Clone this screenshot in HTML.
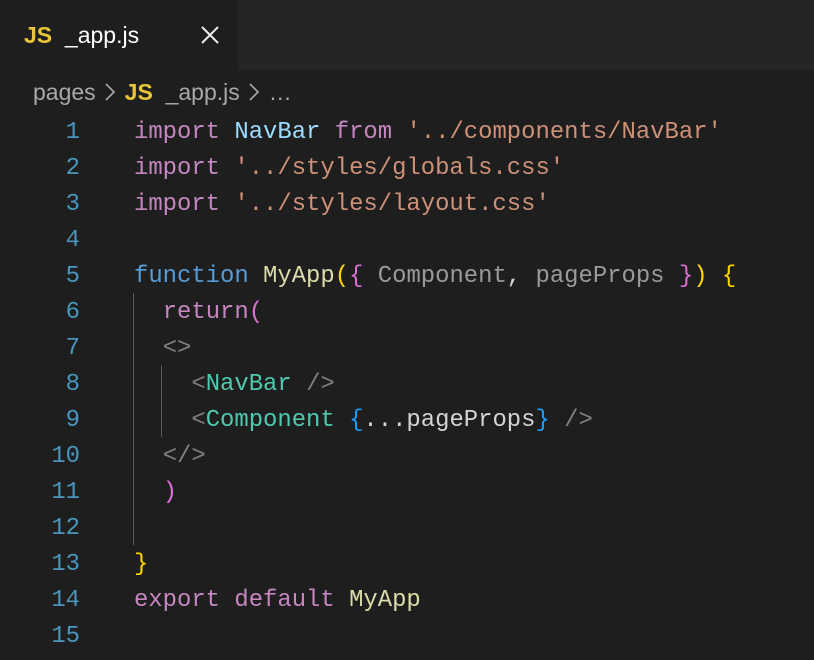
<!DOCTYPE html>
<html><head><style>
body{margin:0;width:814px;height:660px;background:#1e1e1e;overflow:hidden;font-family:"Liberation Sans",sans-serif}
.tabbar{position:absolute;left:0;top:0;width:814px;height:70px;background:#252526}
.tab{position:absolute;left:0;top:0;width:238px;height:70px;background:#1e1e1e}
.js{color:#e8c63a;font-weight:bold}
.t1{position:absolute;left:24px;top:22px;font-size:23px;color:#fff}
.bc{position:absolute;left:33px;top:79px;font-size:23px;color:#a9a9a9;white-space:nowrap}
.code{position:absolute;left:0;top:115px;width:814px;font-family:"Liberation Mono",monospace;font-size:23.9px}
.l{height:36px;line-height:36px;white-space:pre;position:relative;width:814px}
.n{position:absolute;right:734px;color:#4a95bd;text-align:right}
.c{position:absolute;left:134px;color:#d4d4d4}
.k{color:#c586c0}.b{color:#569cd6}.v{color:#9cdcfe}.s{color:#ce9178}.f{color:#dcdcaa}.y{color:#ffd700}.p{color:#da70d6}.g{color:#9a9a9a}.tg{color:#4ec9b0}.br{color:#808080}.bl{color:#179fff}
.guide{position:absolute;width:1px;background:#5a5a5a}
svg.ch{display:inline-block;vertical-align:-2px;margin:0 9px 0 8px}
</style></head><body>
<div class="tabbar"><div class="tab"><span class="t1"><span class="js">JS</span>&nbsp; _app.js</span>
<svg style="position:absolute;left:201px;top:26px" width="18" height="18"><path d="M1 1L17 17M17 1L1 17" stroke="#eee" stroke-width="2"/></svg></div></div>
<div class="bc">pages<svg class="ch" width="12" height="20"><path d="M2 2L10 10L2 18" stroke="#aaa" stroke-width="1.6" fill="none"/></svg><span class="js">JS</span>&nbsp; _app.js<svg class="ch" width="12" height="20"><path d="M2 2L10 10L2 18" stroke="#aaa" stroke-width="1.6" fill="none"/></svg>…</div>
<div class="guide" style="left:133px;top:293px;height:252px"></div>
<div class="guide" style="left:161px;top:365px;height:72px"></div>
<div class="code">
<div class="l"><span class="n">1</span><span class="c"><span class="k">import</span> <span class="v">NavBar</span> <span class="k">from</span> <span class="s">'../components/NavBar'</span></span></div>
<div class="l"><span class="n">2</span><span class="c"><span class="k">import</span> <span class="s">'../styles/globals.css'</span></span></div>
<div class="l"><span class="n">3</span><span class="c"><span class="k">import</span> <span class="s">'../styles/layout.css'</span></span></div>
<div class="l"><span class="n">4</span></div>
<div class="l"><span class="n">5</span><span class="c"><span class="b">function</span> <span class="f">MyApp</span><span class="y">(</span><span class="p">{</span> <span class="g">Component</span>, <span class="g">pageProps</span> <span class="p">}</span><span class="y">)</span> <span class="y">{</span></span></div>
<div class="l"><span class="n">6</span><span class="c">  <span class="k">return</span><span class="p">(</span></span></div>
<div class="l"><span class="n">7</span><span class="c">  <span class="br">&lt;&gt;</span></span></div>
<div class="l"><span class="n">8</span><span class="c">    <span class="br">&lt;</span><span class="tg">NavBar</span> <span class="br">/&gt;</span></span></div>
<div class="l"><span class="n">9</span><span class="c">    <span class="br">&lt;</span><span class="tg">Component</span> <span class="bl">{</span>...pageProps<span class="bl">}</span> <span class="br">/&gt;</span></span></div>
<div class="l"><span class="n">10</span><span class="c">  <span class="br">&lt;/&gt;</span></span></div>
<div class="l"><span class="n">11</span><span class="c">  <span class="p">)</span></span></div>
<div class="l"><span class="n">12</span></div>
<div class="l"><span class="n">13</span><span class="c"><span class="y">}</span></span></div>
<div class="l"><span class="n">14</span><span class="c"><span class="k">export</span> <span class="k">default</span> <span class="f">MyApp</span></span></div>
<div class="l"><span class="n">15</span></div>
</div>
</body></html>
